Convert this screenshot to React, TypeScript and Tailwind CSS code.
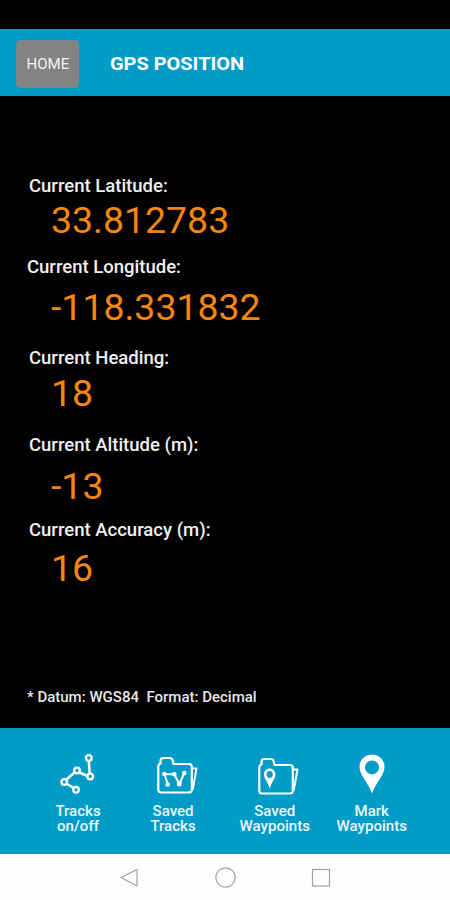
import React from "react";

const readings = [
  { label: "Current Latitude:", value: "33.812783", row: "pl-[29px] h-[81px]", gap: "mt-[7px] ml-[22px]" },
  { label: "Current Longitude:", value: "-118.331832", row: "pl-[27px] h-[91px]", gap: "mt-[13px] ml-[24px]" },
  { label: "Current Heading:", value: "18", row: "pl-[29px] h-[87px]", gap: "mt-[8px] ml-[22px]" },
  { label: "Current Altitude (m):", value: "-13", row: "pl-[29px] h-[85px]", gap: "mt-[14px] ml-[22px]" },
  { label: "Current Accuracy (m):", value: "16", row: "pl-[29px] h-[80px]", gap: "mt-[11px] ml-[22px]" },
];

function TracksIcon() {
  return (
    <svg width="38" height="44" viewBox="0 0 38 44" fill="none" stroke="white" strokeWidth="2.5">
      <path d="M28.8 10.5 29.8 23M27.5 25 19.5 21.5M15 21 6.5 28.5M6.5 32.5 13.5 37" />
      <circle cx="28.8" cy="7" r="2.8" strokeWidth="2.3" />
      <circle cx="30.2" cy="25.5" r="2.8" strokeWidth="2.3" />
      <circle cx="17" cy="19.5" r="2.8" strokeWidth="2.3" />
      <circle cx="4.2" cy="31" r="2.8" strokeWidth="2.3" />
      <circle cx="16" cy="38.8" r="2.8" strokeWidth="2.3" />
    </svg>
  );
}

function Folder({ children }: { children: React.ReactNode }) {
  return (
    <svg width="42" height="39" viewBox="0 0 42 39" fill="none" stroke="white" strokeWidth="2.2" strokeLinejoin="round" strokeLinecap="round">
      <path d="M2.3 11Q2.3 8 4.5 7.5V5Q4.5 2 7.5 2H13.5Q16 2 16.5 4L17.5 8H33Q35.8 8 35.8 11V33.5Q35.8 36.5 33 36.5H5.3Q2.3 36.5 2.3 33.5Z" />
      <path d="M36.5 12.5H40.5L36.8 33" strokeWidth="2" />
      {children}
    </svg>
  );
}

function SavedTracksIcon() {
  return (
    <Folder>
      <path d="M11.7 28 8.5 18.3 18.3 18.3 23.3 28 28.3 17" strokeWidth="1.9" />
      <g fill="white" stroke="none">
        <circle cx="11.7" cy="28.5" r="2.3" />
        <circle cx="8.3" cy="18" r="2.2" />
        <circle cx="18.3" cy="18.3" r="2.3" />
        <circle cx="23.3" cy="28" r="2.5" />
        <circle cx="28.3" cy="17" r="2.3" />
      </g>
    </Folder>
  );
}

function SavedWaypointsIcon() {
  return (
    <Folder>
      <path
        fill="white"
        stroke="none"
        fillRule="evenodd"
        d="M12.7 11.5C9.4 11.5 7 14.1 7 17.5C7 21.5 11 25 12.7 31.5C14.5 25 18.4 21.5 18.4 17.5C18.4 14.1 16 11.5 12.7 11.5ZM12.7 14.1A3.1 3.4 0 1 1 12.7 20.9A3.1 3.4 0 1 1 12.7 14.1Z"
      />
    </Folder>
  );
}

function PinIcon() {
  return (
    <svg width="26" height="40" viewBox="0 0 26 40" fill="white">
      <path
        fillRule="evenodd"
        d="M13 0.5C6 0.5 0.5 5.8 0.5 12.8C0.5 21.5 9 28 13 39.5C17 28 25.5 21.5 25.5 12.8C25.5 5.8 20 0.5 13 0.5ZM13 6.4A7 7 0 1 1 13 20.4A7 7 0 1 1 13 6.4Z"
      />
    </svg>
  );
}

const tabs = [
  { lines: ["Tracks", "on/off"], icon: <TracksIcon />, cell: "w-[96px]", art: "pt-[23px] pl-[1px]" },
  { lines: ["Saved", "Tracks"], icon: <SavedTracksIcon />, cell: "w-[94px]", art: "pt-[28px] pl-[7px]" },
  { lines: ["Saved", "Waypoints"], icon: <SavedWaypointsIcon />, cell: "w-[109px]", art: "pt-[29px] pl-[7px]" },
  { lines: ["Mark", "Waypoints"], icon: <PinIcon />, cell: "w-[85px]", art: "pt-[26px]" },
];

export default function App() {
  return (
    <div className="flex h-[900px] w-[450px] flex-col overflow-hidden bg-black font-['Roboto',sans-serif] text-white">
      <header className="mt-[29px] flex h-[67px] shrink-0 items-start bg-[#019bc8]">
        <button className="mt-[11px] ml-[16px] h-[48px] w-[63px] rounded-[5px] bg-[#838383] text-[14px] leading-[48px] text-[#f2f2f2]">
          <span className="inline-block scale-x-[1.07]">HOME</span>
        </button>
        <h1 className="mt-[22px] ml-[31px] origin-left scale-x-[1.05] text-[19px] leading-[25px] font-bold whitespace-nowrap">GPS POSITION</h1>
      </header>

      <main className="flex h-[632px] shrink-0 flex-col pt-[80px]">
        {readings.map((r) => (
          <section key={r.label} className={`shrink-0 ${r.row}`}>
            <h2 className="w-fit origin-left scale-x-[1.028] text-[18px] leading-[20px] font-medium whitespace-nowrap text-[#f0f0f0]">
              {r.label}
            </h2>
            <p className={`${r.gap} w-fit origin-left scale-x-[1.04] text-[36px] leading-[36px] text-[#f5860f]`}>{r.value}</p>
          </section>
        ))}
        <p className="mt-[89px] ml-[27px] w-fit origin-left scale-x-[1.072] text-[14px] leading-[16px] font-medium whitespace-pre text-[#e8e8e8]">
          {"* Datum: WGS84  Format: Decimal"}
        </p>
      </main>

      <nav className="flex h-[126px] shrink-0 bg-[#019bc8] pl-[30px]">
        {tabs.map((t) => (
          <button key={t.lines.join(" ")} className={`flex shrink-0 flex-col items-center ${t.cell}`}>
            <span className={`flex h-[76px] items-start ${t.art}`}>{t.icon}</span>
            <span className="scale-x-[1.075] text-center text-[14px] leading-[15px] font-medium text-[#e9f8fc]">
              {t.lines[0]}
              <br />
              {t.lines[1]}
            </span>
          </button>
        ))}
      </nav>

      <footer className="flex h-[46px] shrink-0 items-start bg-[#fdfdfd] pt-[12px] pl-[119px]">
        <svg width="220" height="24" viewBox="0 0 220 24" fill="none" stroke="#a3a3a3" strokeWidth="1.2">
          <path d="M18 3.5V20L2 11.5Z" strokeLinejoin="round" />
          <circle cx="106.5" cy="11.5" r="9.7" />
          <rect x="193.5" y="3.5" width="17" height="16.5" />
        </svg>
      </footer>
    </div>
  );
}
